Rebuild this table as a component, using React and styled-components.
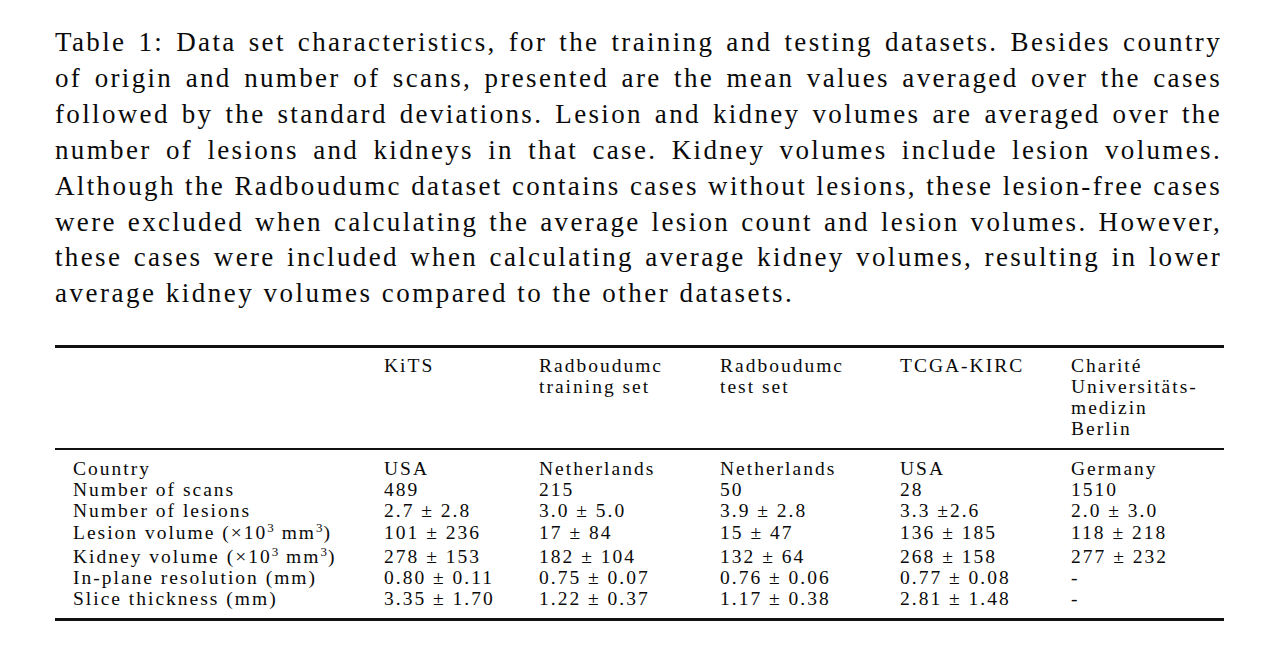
import React from 'react';
import styled, { createGlobalStyle } from 'styled-components';

const Global = createGlobalStyle`
  html, body { margin: 0; padding: 0; background: #fff; }
  body { font-family: "Liberation Serif", "Times New Roman", serif; color: #0a0a0a; }
`;

const Page = styled.div`
  width: 1276px;
  height: 649px;
  box-sizing: border-box;
  padding: 25px 0 0 55px;
  background: #fff;
  overflow: hidden;
`;

const Caption = styled.div`
  width: 1167px;
  font-size: 27px;
  line-height: 35.9px;
  letter-spacing: 2.35px;
`;

const CapLine = styled.div`
  text-align: ${(p) => (p.$last ? 'left' : 'justify')};
  text-align-last: ${(p) => (p.$last ? 'left' : 'justify')};
  letter-spacing: ${(p) => (p.$last ? '2.5px' : 'inherit')};
`;

const Table = styled.div`
  width: 1169px;
  margin-top: 32.3px;
  border-top: 3px solid #111;
  border-bottom: 3px solid #111;
  font-size: 19.5px;
  line-height: 21px;
  letter-spacing: 2px;
`;

const cols = '329px 155px 181px 180px 171px 1fr';

const Head = styled.div`
  display: grid;
  grid-template-columns: ${cols};
  padding: 7.4px 0 8.6px;
  border-bottom: 2px solid #111;
`;

const Body = styled.div`
  padding: 8.6px 0 8.4px;
`;

const Row = styled.div`
  display: grid;
  grid-template-columns: ${cols};
  padding-top: ${(p) => p.$lift || 0}px;
`;

const Cell = styled.div`
  padding-left: ${(p) => (p.$label ? 18 : 0)}px;
  white-space: nowrap;
`;

const Sup = styled.sup`
  font-size: 13px;
  letter-spacing: 1px;
  line-height: 0;
  vertical-align: baseline;
  position: relative;
  top: -7.5px;
`;

const captionLines = [
  'Table 1: Data set characteristics, for the training and testing datasets. Besides country',
  'of origin and number of scans, presented are the mean values averaged over the cases',
  'followed by the standard deviations. Lesion and kidney volumes are averaged over the',
  'number of lesions and kidneys in that case. Kidney volumes include lesion volumes.',
  'Although the Radboudumc dataset contains cases without lesions, these lesion-free cases',
  'were excluded when calculating the average lesion count and lesion volumes. However,',
  'these cases were included when calculating average kidney volumes, resulting in lower',
  'average kidney volumes compared to the other datasets.',
];

const headers = [
  [],
  ['KiTS'],
  ['Radboudumc', 'training set'],
  ['Radboudumc', 'test set'],
  ['TCGA-KIRC'],
  ['Charité', 'Universitäts-', 'medizin', 'Berlin'],
];

const vol = (name) => (
  <>
    {name} (×10<Sup>3</Sup> mm<Sup>3</Sup>)
  </>
);

const rows = [
  { label: 'Country', vals: ['USA', 'Netherlands', 'Netherlands', 'USA', 'Germany'] },
  { label: 'Number of scans', vals: ['489', '215', '50', '28', '1510'] },
  { label: 'Number of lesions', vals: ['2.7 ± 2.8', '3.0 ± 5.0', '3.9 ± 2.8', '3.3 ±2.6', '2.0 ± 3.0'] },
  { label: vol('Lesion volume'), lift: 1, vals: ['101 ± 236', '17 ± 84', '15 ± 47', '136 ± 185', '118 ± 218'] },
  { label: vol('Kidney volume'), lift: 3, vals: ['278 ± 153', '182 ± 104', '132 ± 64', '268 ± 158', '277 ± 232'] },
  { label: 'In-plane resolution (mm)', vals: ['0.80 ± 0.11', '0.75 ± 0.07', '0.76 ± 0.06', '0.77 ± 0.08', '-'] },
  { label: 'Slice thickness (mm)', vals: ['3.35 ± 1.70', '1.22 ± 0.37', '1.17 ± 0.38', '2.81 ± 1.48', '-'] },
];

export default function App() {
  return (
    <Page>
      <Global />
      <Caption>
        {captionLines.map((l, i) => (
          <CapLine key={i} $last={i === captionLines.length - 1}>
            {l}
          </CapLine>
        ))}
      </Caption>
      <Table>
        <Head>
          {headers.map((h, i) => (
            <Cell key={i} $label={i === 0}>
              {h.map((t, j) => (
                <div key={j}>{t}</div>
              ))}
            </Cell>
          ))}
        </Head>
        <Body>
          {rows.map((r, i) => (
            <Row key={i} $lift={r.lift}>
              <Cell $label>{r.label}</Cell>
              {r.vals.map((v, j) => (
                <Cell key={j}>{v}</Cell>
              ))}
            </Row>
          ))}
        </Body>
      </Table>
    </Page>
  );
}
